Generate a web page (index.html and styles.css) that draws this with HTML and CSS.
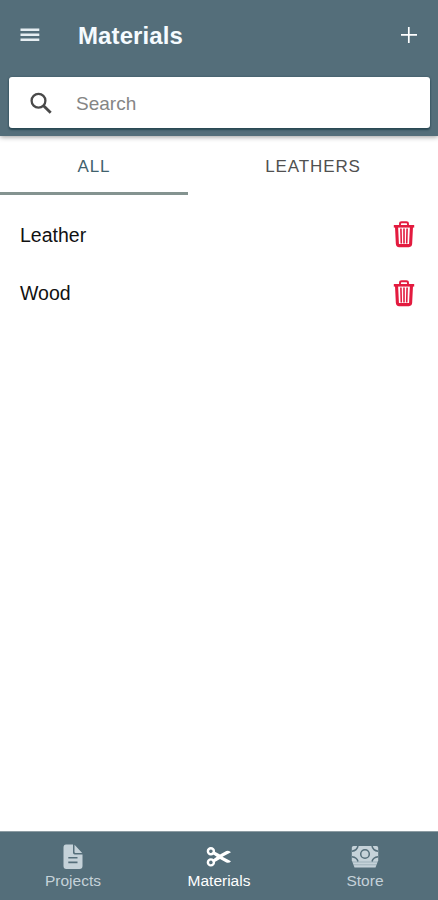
FILE: index.html
```
<!DOCTYPE html>
<html lang="en">
<head>
    <meta charset="UTF-8">
    <meta name="viewport" content="width=device-width, initial-scale=1.0">
    <title>Materials</title>
    <link rel="stylesheet" href="styles.css">
</head>
<body>
    <header class="header">
        <div class="toolbar">
            <button class="icon-button" aria-label="Menu">
                <svg width="20" height="14" viewBox="0 0 20 14"><path d="M.5 1.700h18.800M.5 6.700h18.800M.5 11.700h18.800" stroke="#e6eef2" stroke-width="2.500"/></svg>
            </button>
            <h1>Materials</h1>
            <button class="icon-button" aria-label="Add">
                <svg width="16" height="16" viewBox="0 0 16 16"><path d="M0 7.800h16M7.800 0v16" stroke="#fff" stroke-width="1.700"/></svg>
            </button>
        </div>
        <label class="search">
            <svg width="22" height="22" viewBox="0 0 22 22" fill="none" stroke="#4a4a4a"><circle cx="8.500" cy="8.700" r="6.900" stroke-width="2.300"/><path d="M13.300 13.500l7.400 7.200" stroke-width="2.900"/></svg>
            <input type="text" placeholder="Search">
        </label>
    </header>

    <nav class="tabs">
        <a class="tab active">ALL</a>
        <a class="tab">LEATHERS</a>
    </nav>

    <ul class="list">
        <li>
            <span>Leather</span>
            <svg class="trash" width="22" height="28" viewBox="0 0 22 28"><use href="#trash"/></svg>
        </li>
        <li>
            <span>Wood</span>
            <svg class="trash" width="22" height="28" viewBox="0 0 22 28"><use href="#trash"/></svg>
        </li>
    </ul>

    <footer class="tab-bar">
        <a class="tab-button">
            <svg width="20" height="26" viewBox="0 0 20 26">
                <path fill="currentColor" fill-rule="evenodd" d="M3 .5h7v8.200q0 1.800 1.800 1.800h7.700V22q0 3-3 3H3.200q-2.700 0-2.700-3V3.500Q.5.5 3 .5zM5.300 12.900v1.700h9.200v-1.700zM5.300 17.600v1.700h9.200v-1.700z"/>
                <path fill="currentColor" d="M11.500.8l7.700 8.200h-6.700q-1 0-1-1z"/>
            </svg>
            <span>Projects</span>
        </a>
        <a class="tab-button active">
            <svg width="26" height="26" viewBox="0 0 26 26">
                <g fill="none" stroke="currentColor" stroke-width="2.400"><circle cx="4.900" cy="7.200" r="3"/><circle cx="4.900" cy="18.400" r="3"/></g>
                <path fill="currentColor" d="M7.500 7L14 10.600l6.300-3.500q2.800-1 4.700 1.200L16.500 12.800l8.500 4.500q-1.900 2.200-4.700 1.200L14 15l-6.500 3.700-1.600-2.500L10.700 12.800 5.900 9.500z"/>
            </svg>
            <span>Materials</span>
        </a>
        <a class="tab-button">
            <svg width="28" height="26" viewBox="0 0 28 26">
                <path fill="currentColor" d="M2.500 2h23q1.700 0 1.700 1.700v12.600L24.500 23.500h-21L.8 16.300V3.700Q.8 2 2.500 2z"/>
                <g fill="none" stroke="#546e7a" stroke-width="1.500">
                    <circle cx="14" cy="10" r="4.300"/>
                    <path d="M1 7.200Q6 6.500 7 2M27 7.200Q22 6.500 21 2M1 12.800Q6 13.500 7 17.500M27 12.800Q22 13.500 21 17.500"/>
                    <path d="M1.500 18h25M2.500 20.800h23" stroke-width=".6" opacity=".55"/>
                </g>
            </svg>
            <span>Store</span>
        </a>
    </footer>

    <svg class="symbols">
        <symbol id="trash" viewBox="0 0 22 28">
            <path d="M7 5V3.800Q7 2.300 8.700 2.300h4.600Q15 2.300 15 3.800V5" fill="none" stroke="currentColor" stroke-width="1.900"/>
            <path d="M.8 6.300h20.400" fill="none" stroke="currentColor" stroke-width="2.600"/>
            <path d="M3.500 6l.9 18q.1 1.600 1.700 1.600h9.800q1.600 0 1.700-1.600L18.500 6" fill="none" stroke="currentColor" stroke-width="3.100"/>
            <path d="M7.900 8.500l.4 15M11 8.500v15M14.100 8.500l-.4 15" fill="none" stroke="currentColor" stroke-width="1.600"/>
        </symbol>
    </svg>
</body>
</html>
```

FILE: styles.css
```
* {
    margin: 0;
    padding: 0;
    box-sizing: border-box;
}

body {
    display: flex;
    flex-direction: column;
    height: 100vh;
    font-family: "Liberation Sans", Arial, sans-serif;
    background-color: #fff;
    color: #111;
    overflow: hidden;
}

svg {
    display: block;
    flex-shrink: 0;
}

.header {
    height: 136px;
    padding: 0 8px 0 9px;
    background-color: #546e7a;
    box-shadow: 0 1px 5px rgba(0, 0, 0, 0.4);
}

.toolbar {
    display: flex;
    align-items: center;
    height: 77px;
    padding: 0 13px 7px 11px;
}

.toolbar h1 {
    flex: 1;
    margin-left: 38px;
    padding-top: 2px;
    font-size: 24px;
    line-height: 28px;
    letter-spacing: 0.1px;
    color: #f5fbff;
}

.icon-button {
    border: none;
    background: none;
}

.search {
    display: flex;
    align-items: center;
    gap: 24px;
    height: 51px;
    padding: 0 21px;
    background-color: #fff;
    border-radius: 3px;
    box-shadow: 0 2px 2px #294853, 0 0 2px rgba(30, 60, 70, 0.6);
}

.search input {
    flex: 1;
    padding-top: 2px;
    border: none;
    outline: none;
    font-family: inherit;
    font-size: 19px;
}

.search input::placeholder {
    color: #858585;
}

.tabs {
    display: flex;
    height: 59px;
}

.tab {
    width: 250px;
    padding-top: 21px;
    text-align: center;
    font-size: 17px;
    line-height: 20px;
    letter-spacing: 0.9px;
    color: #505050;
}

.tab.active {
    width: 188px;
    color: #40616d;
    border-bottom: 3px solid #849390;
}

.list {
    flex: 1;
    padding-top: 10px;
    list-style: none;
}

.list li {
    display: flex;
    justify-content: space-between;
    align-items: center;
    height: 58.500px;
    padding: 0 23px 0 20px;
    font-size: 19.500px;
}

.list span {
    padding-top: 2px;
}

.trash {
    color: #e31b3f;
}

.tab-bar {
    display: flex;
    height: 69px;
    background-color: #546e7a;
    border-top: 1px solid #8d9ca3;
}

.tab-button {
    flex: 1;
    display: flex;
    flex-direction: column;
    align-items: center;
    padding-top: 12px;
    font-size: 15.500px;
    line-height: 22px;
    color: #c5d2d9;
}

.tab-button.active {
    color: #fff;
}

.symbols {
    display: none;
}
```
